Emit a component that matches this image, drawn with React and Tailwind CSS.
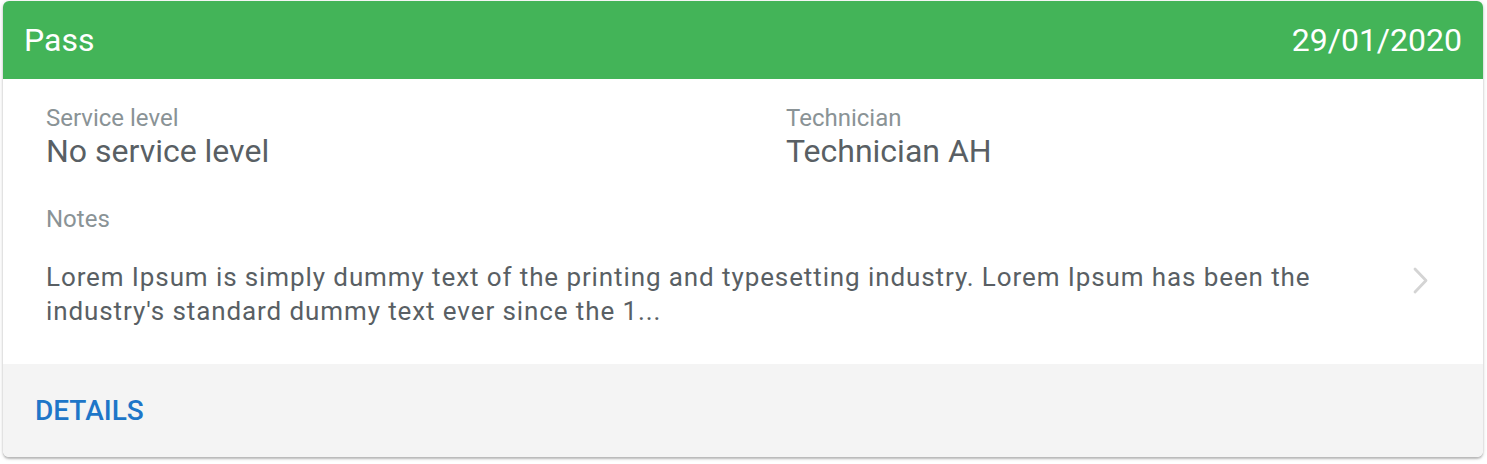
export default function App() {
  return (
    <div className="bg-white pl-[3px] pr-[4px] pt-px pb-[7px]" style={{ fontFamily: "Roboto, 'Liberation Sans', sans-serif" }}>
      <div className="rounded-md bg-white overflow-hidden shadow-[0_2px_2px_rgba(0,0,0,0.2),0_1px_4px_rgba(0,0,0,0.16)]">
        {/* Header */}
        <div className="h-[78px] bg-[#43b458] flex items-center justify-between pl-[21px] pr-[21px] text-white text-[32px]">
          <span>Pass</span>
          <span>29/01/2020</span>
        </div>

        {/* Body */}
        <div className="pl-[43px] pr-[52px] pt-[25px] pb-[36px]">
          <div className="flex">
            <div className="w-[740px]">
              <div className="text-[24px] leading-[28px] text-[#8a9396]">Service level</div>
              <div className="mt-[1px] text-[32px] leading-[36px] text-[#595f64]">No service level</div>
            </div>
            <div>
              <div className="text-[24px] leading-[28px] text-[#8a9396]">Technician</div>
              <div className="mt-[1px] text-[32px] leading-[36px] text-[#595f64]">Technician AH</div>
            </div>
          </div>
          <div className="mt-[36px] text-[24px] leading-[28px] text-[#8a9396]">Notes</div>
          <div className="mt-[28px] flex items-start justify-between">
            <p className="flex-1 pr-[40px] text-[26px] leading-[33.5px] tracking-[0.9px] text-[#595f64]">
              Lorem Ipsum is simply dummy text of the printing and typesetting industry. Lorem Ipsum has been the industry's standard dummy text ever since the 1...
            </p>
            <svg width="20" height="30" viewBox="0 0 20 30" className="mt-[4px] shrink-0">
              <path d="M4 4 L15 15.5 L4 27" fill="none" stroke="#d4d4d4" strokeWidth="2.8" strokeLinecap="round" strokeLinejoin="round" />
            </svg>
          </div>
        </div>

        {/* Footer */}
        <div className="h-[93px] bg-[#f4f4f4] flex items-center pl-[32px]">
          <span className="text-[28px] font-medium text-[#1e76c8]">DETAILS</span>
        </div>
      </div>
    </div>
  );
}
